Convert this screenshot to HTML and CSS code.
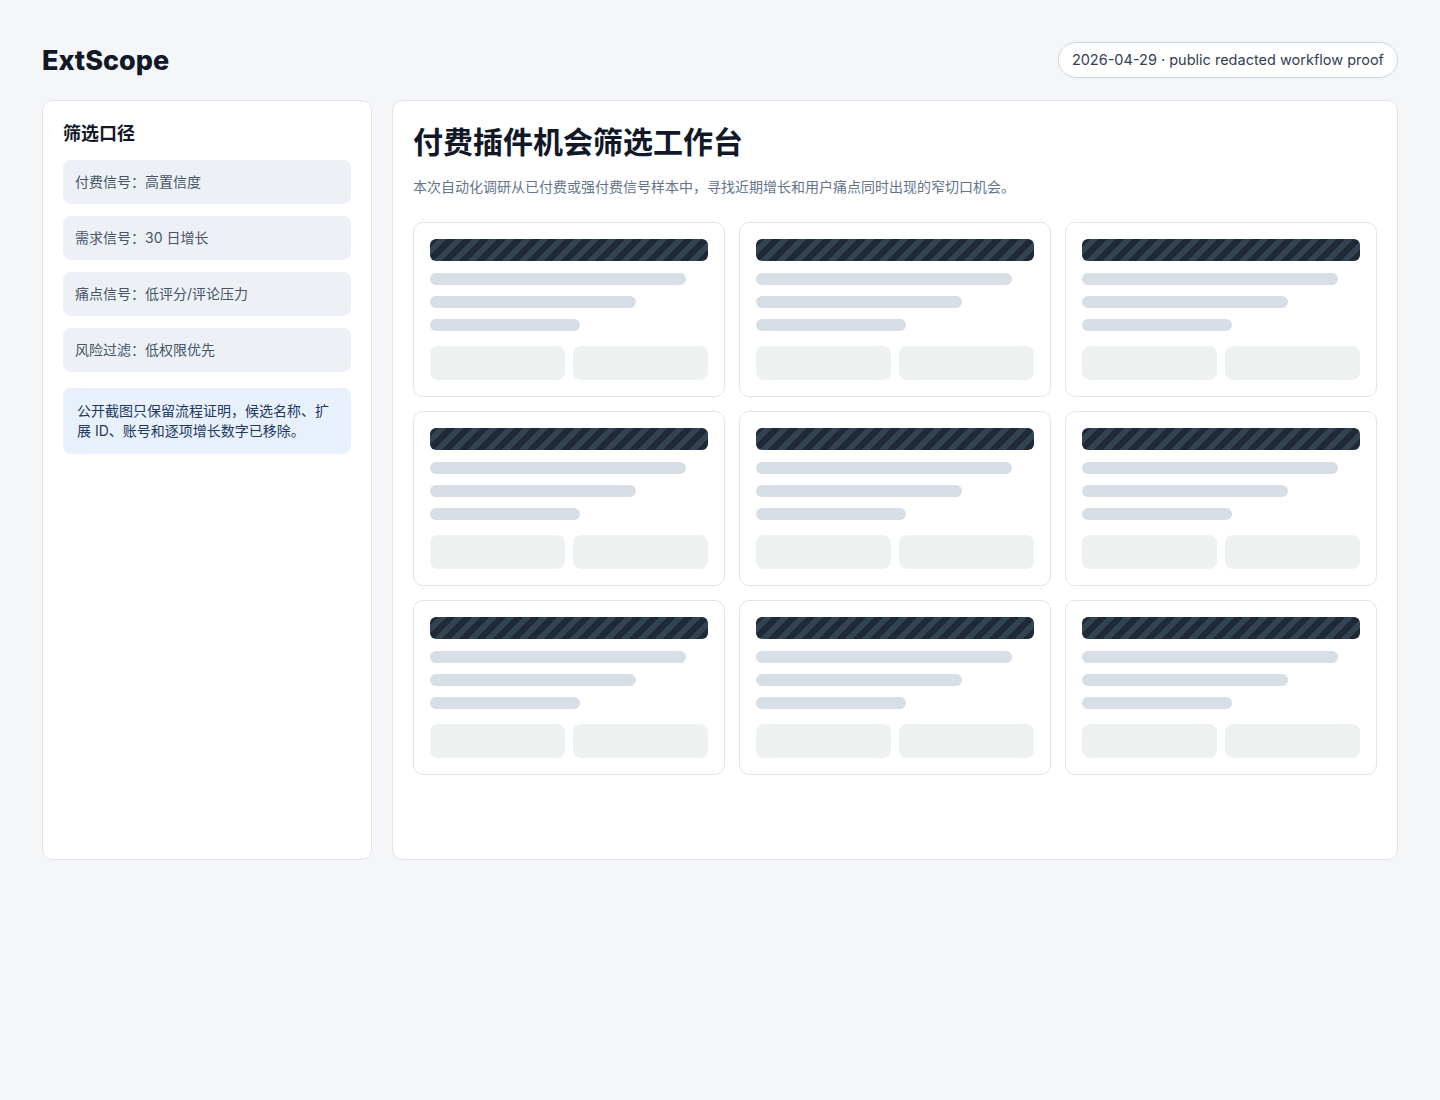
FILE: index.html
```html
<!DOCTYPE html>
<html lang="zh-CN">
<head>
    <meta charset="UTF-8">
    <meta name="viewport" content="width=device-width, initial-scale=1.0">
    <title>ExtScope</title>
    <link rel="stylesheet" href="styles.css">
</head>
<body>
    <header class="topbar">
        <h1 class="brand">ExtScope</h1>
        <span class="badge">2026-04-29 · public redacted workflow proof</span>
    </header>

    <div class="layout">
        <aside class="panel sidebar">
            <h2 class="side-title">筛选口径</h2>
            <div class="filter">付费信号：高置信度</div>
            <div class="filter">需求信号：30 日增长</div>
            <div class="filter">痛点信号：低评分/评论压力</div>
            <div class="filter">风险过滤：低权限优先</div>
            <div class="note">公开截图只保留流程证明，候选名称、扩展 ID、账号和逐项增长数字已移除。</div>
        </aside>

        <main class="panel workspace">
            <h2 class="page-title">付费插件机会筛选工作台</h2>
            <p class="lead">本次自动化调研从已付费或强付费信号样本中，寻找近期增长和用户痛点同时出现的窄切口机会。</p>

            <div class="grid">
                <div class="card">
                    <div class="redacted"></div>
                    <div class="line l1"></div>
                    <div class="line l2"></div>
                    <div class="line l3"></div>
                    <div class="stats"><div class="stat"></div><div class="stat"></div></div>
                </div>
                <div class="card">
                    <div class="redacted"></div>
                    <div class="line l1"></div>
                    <div class="line l2"></div>
                    <div class="line l3"></div>
                    <div class="stats"><div class="stat"></div><div class="stat"></div></div>
                </div>
                <div class="card">
                    <div class="redacted"></div>
                    <div class="line l1"></div>
                    <div class="line l2"></div>
                    <div class="line l3"></div>
                    <div class="stats"><div class="stat"></div><div class="stat"></div></div>
                </div>
                <div class="card">
                    <div class="redacted"></div>
                    <div class="line l1"></div>
                    <div class="line l2"></div>
                    <div class="line l3"></div>
                    <div class="stats"><div class="stat"></div><div class="stat"></div></div>
                </div>
                <div class="card">
                    <div class="redacted"></div>
                    <div class="line l1"></div>
                    <div class="line l2"></div>
                    <div class="line l3"></div>
                    <div class="stats"><div class="stat"></div><div class="stat"></div></div>
                </div>
                <div class="card">
                    <div class="redacted"></div>
                    <div class="line l1"></div>
                    <div class="line l2"></div>
                    <div class="line l3"></div>
                    <div class="stats"><div class="stat"></div><div class="stat"></div></div>
                </div>
                <div class="card">
                    <div class="redacted"></div>
                    <div class="line l1"></div>
                    <div class="line l2"></div>
                    <div class="line l3"></div>
                    <div class="stats"><div class="stat"></div><div class="stat"></div></div>
                </div>
                <div class="card">
                    <div class="redacted"></div>
                    <div class="line l1"></div>
                    <div class="line l2"></div>
                    <div class="line l3"></div>
                    <div class="stats"><div class="stat"></div><div class="stat"></div></div>
                </div>
                <div class="card">
                    <div class="redacted"></div>
                    <div class="line l1"></div>
                    <div class="line l2"></div>
                    <div class="line l3"></div>
                    <div class="stats"><div class="stat"></div><div class="stat"></div></div>
                </div>
            </div>
        </main>
    </div>
</body>
</html>
```

FILE: styles.css
```css
* {
    box-sizing: border-box;
}
body {
    margin: 0;
    padding: 42px;
    background-color: #f5f6f8;
    font-family: Inter, "Noto Sans CJK SC", sans-serif;
    color: #111827;
}
.topbar {
    display: flex;
    justify-content: space-between;
    align-items: center;
    height: 36px;
    margin-bottom: 22px;
}
.brand {
    margin: 2px 0 0;
    font-size: 27px;
    font-weight: 800;
    line-height: 36px;
    color: #111827;
}
.badge {
    display: inline-block;
    height: 36px;
    line-height: 34px;
    padding: 0 13px;
    border: 1px solid #cbd5e1;
    border-radius: 18px;
    background-color: #ffffff;
    font-size: 14.5px;
    color: #334155;
}
.layout {
    display: grid;
    grid-template-columns: 330px 1fr;
    gap: 20px;
}
.panel {
    height: 760px;
    background-color: #ffffff;
    border: 1px solid #dfe3ea;
    border-radius: 10px;
    padding: 20px;
}
.side-title {
    margin: 1px 0 14px;
    font-size: 18px;
    font-weight: 700;
    line-height: 24px;
    color: #111827;
}
.filter {
    height: 44px;
    line-height: 44px;
    padding: 0 12px;
    margin-bottom: 12px;
    background-color: #edf1f5;
    border-radius: 8px;
    font-size: 14px;
    color: #475569;
}
.note {
    margin-top: 16px;
    padding: 13px 14px;
    background-color: #e8f0fc;
    border-radius: 8px;
    font-size: 14px;
    line-height: 20px;
    color: #1e3a5f;
}
.page-title {
    margin: 0;
    font-size: 30px;
    font-weight: 700;
    line-height: 42px;
    color: #111827;
}
.lead {
    margin: 14px 0 25px;
    font-size: 14px;
    line-height: 20px;
    color: #64748b;
}
.grid {
    display: grid;
    grid-template-columns: repeat(3, 1fr);
    gap: 14px;
}
.card {
    height: 175px;
    border: 1px solid #dfe3ea;
    border-radius: 10px;
    padding: 16px;
}
.redacted {
    height: 22px;
    border-radius: 6px;
    margin-bottom: 12px;
    background: repeating-linear-gradient(135deg, #1f2a36 0, #1f2a36 6px, #324354 6px, #324354 12px);
}
.line {
    height: 12px;
    border-radius: 6px;
    background-color: #d7dee6;
    margin-bottom: 11px;
}
.l1 { width: 92%; }
.l2 { width: 74%; }
.l3 { width: 54%; margin-bottom: 15px; }
.stats {
    display: grid;
    grid-template-columns: 1fr 1fr;
    gap: 8px;
}
.stat {
    height: 34px;
    border-radius: 8px;
    background-color: #edf2f0;
}
```
